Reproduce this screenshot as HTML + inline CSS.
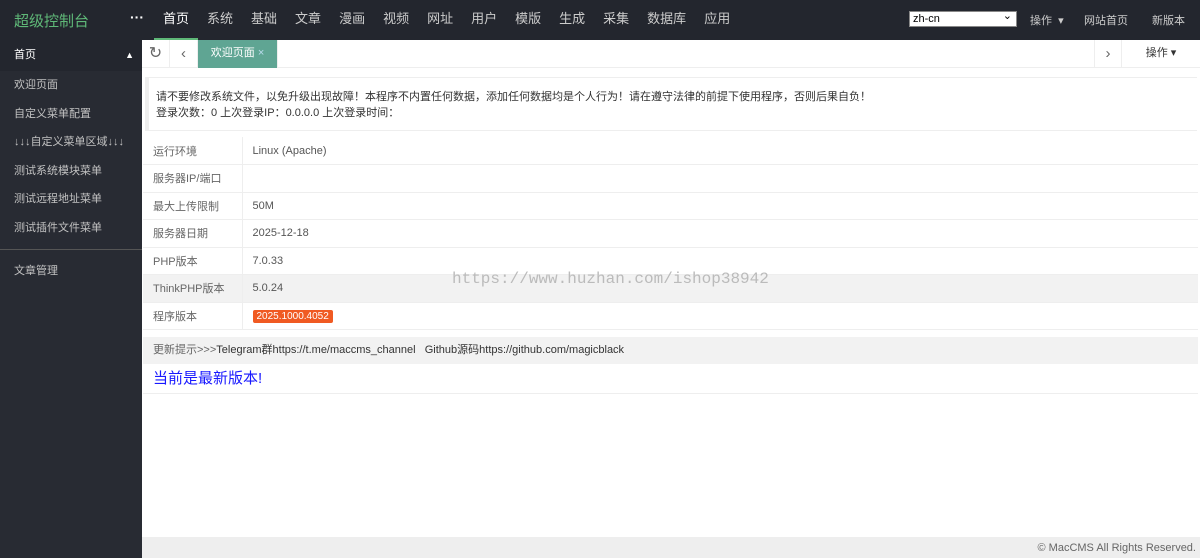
<!DOCTYPE html>
<html><head><meta charset="utf-8"><style>
*{margin:0;padding:0;box-sizing:border-box}
body{width:1200px;height:558px;overflow:hidden;background:#fff;font-family:"Liberation Sans","Noto Sans CJK SC",sans-serif;font-size:12px;color:#333;position:relative}
.top{position:absolute;left:0;top:0;width:1200px;height:40px;background:#23262e}
.logo{position:absolute;left:14px;top:10px;color:#5fb878;font-size:15px}
.dots{position:absolute;left:130px;top:9px;color:#fff;font-size:14px;font-weight:bold}
.nav{position:absolute;left:154px;top:0;height:40px;display:flex}
.nav span{color:#ccc;font-size:13px;padding:0 9px;line-height:38px}
.nav span.on{color:#fff;border-bottom:2px solid #5fb878}
.sel{position:absolute;left:909px;top:11px;width:108px;height:16px;background:#fff;border:1px solid #888;font-size:11px;color:#000;padding-left:3px;line-height:14px}
.sel:after{content:"⌄";position:absolute;right:4px;top:-3px;font-size:11px}
.tr{position:absolute;top:12px;color:#ccc;font-size:11px}
.side{position:absolute;left:0;top:40px;width:142px;height:518px;background:#282b33}
.side div{height:28.5px;line-height:28px;color:#c2c2c2;font-size:11px;padding-left:14px}
.side .h{background:#23262e;color:#fff;height:31px;line-height:31px}
.tabs{position:absolute;left:142px;top:40px;width:1058px;height:28px;border-bottom:1px solid #eee;background:#fff}
.tb{position:absolute;top:0;height:28px;border-right:1px solid #eee;text-align:center;line-height:27px;color:#666}
.notice{position:absolute;left:145px;top:77px;width:1052px;height:54px;border-left:4px solid #eee;border-top:1px solid #eee;border-bottom:1px solid #eee;padding:11px 0 0 7px;font-size:11px;line-height:16px;color:#333}
table{position:absolute;left:143px;top:137px;width:1055px;border-collapse:collapse}
td{height:27.5px;border-bottom:1px solid #eee;font-size:11px;color:#666;padding-left:10px}
td:first-child{width:99px;border-right:1px solid #eee}
td+td{color:#555}
.gray td{background:#f2f2f2}
.badge{background:#f05a22;color:#fff;padding:1px 4px;border-radius:2px;font-size:10px}
.up{position:absolute;left:143px;top:337px;width:1055px;height:27px;background:#f2f2f2;line-height:27px;padding-left:10px;font-size:11px;color:#666}
.up b{font-weight:normal;color:#333}
.cur{position:absolute;left:143px;top:364px;width:1055px;height:30px;border-bottom:1px solid #eee;color:#1818ff;font-size:15px;line-height:30px;padding-left:10px}
.wm{position:absolute;left:452px;top:270px;font-family:"Liberation Mono",monospace;font-size:16px;color:#bbb}
.foot{position:absolute;left:142px;top:537px;width:1058px;height:21px;background:#eee;text-align:right;padding-right:4px;line-height:22px;font-size:11px;color:#666}
</style></head><body>
<div class="top">
<div class="logo">超级控制台</div><div class="dots">···</div>
<div class="nav"><span class="on">首页</span><span>系统</span><span>基础</span><span>文章</span><span>漫画</span><span>视频</span><span>网址</span><span>用户</span><span>模版</span><span>生成</span><span>采集</span><span>数据库</span><span>应用</span></div>
<div class="sel">zh-cn</div>
<div class="tr" style="left:1030px">操作 &nbsp;▾</div>
<div class="tr" style="left:1084px">网站首页</div>
<div class="tr" style="left:1152px">新版本</div>
</div>
<div class="side">
<div class="h">首页<span style="float:right;margin-right:8px;font-size:9px">▲</span></div>
<div>欢迎页面</div><div>自定义菜单配置</div><div>↓↓↓自定义菜单区域↓↓↓</div><div>测试系统模块菜单</div><div>测试远程地址菜单</div><div>测试插件文件菜单</div>
<div style="border-top:1px solid #555;margin-top:7px;height:30px;line-height:42px;box-sizing:content-box;padding-bottom:5px">文章管理</div>
</div>
<div class="tabs">
<div class="tb" style="left:0;width:28px;font-size:16px">↻</div>
<div class="tb" style="left:28px;width:28px;font-size:15px">‹</div>
<div class="tb" style="left:56px;width:80px;background:#5fa593;color:#fff;font-size:11px">欢迎页面 <span style="color:#bde">×</span></div>
<div class="tb" style="left:952px;width:28px;border-left:1px solid #eee;font-size:15px">›</div>
<div class="tb" style="left:980px;width:78px;border:none;font-size:11px;color:#333">操作 ▾</div>
</div>
<div class="notice">请不要修改系统文件，以免升级出现故障！本程序不内置任何数据，添加任何数据均是个人行为！请在遵守法律的前提下使用程序，否则后果自负！<br>登录次数：0 上次登录IP：0.0.0.0 上次登录时间：</div>
<table>
<tr><td>运行环境</td><td>Linux (Apache)</td></tr>
<tr><td>服务器IP/端口</td><td></td></tr>
<tr><td>最大上传限制</td><td>50M</td></tr>
<tr><td>服务器日期</td><td>2025-12-18</td></tr>
<tr><td>PHP版本</td><td>7.0.33</td></tr>
<tr class="gray"><td>ThinkPHP版本</td><td>5.0.24</td></tr>
<tr><td>程序版本</td><td><span class="badge">2025.1000.4052</span></td></tr>
</table>
<div class="up">更新提示&gt;&gt;&gt;<b>Telegram群https://t.me/maccms_channel &nbsp;&nbsp;Github源码https://github.com/magicblack</b></div>
<div class="cur">当前是最新版本!</div>
<div class="wm">https://www.huzhan.com/ishop38942</div>
<div class="foot">© MacCMS All Rights Reserved.</div>
</body></html>
